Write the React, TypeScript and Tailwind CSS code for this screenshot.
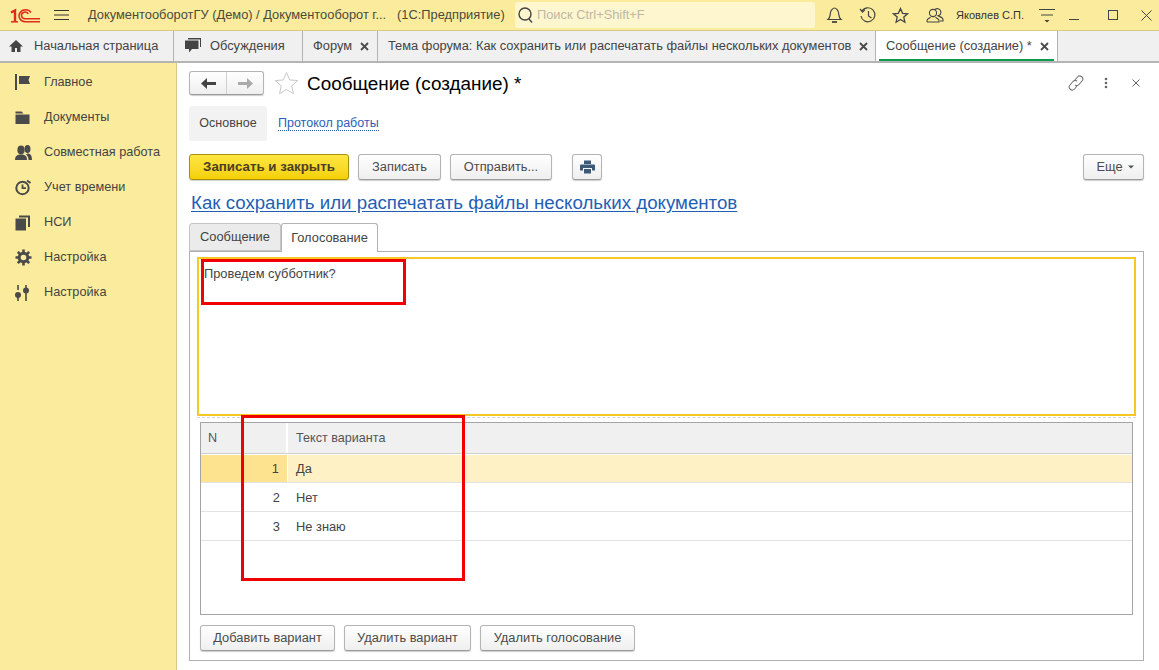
import { type ReactNode } from "react";

const RED_BOX = "absolute z-10 border-[3px] border-[#f00000]";

const BTN =
  "flex h-[26px] items-center justify-center rounded-[3px] border border-[#b4b4b4] border-b-[#9c9c9c] bg-gradient-to-b from-white to-[#efefef] text-[#4b4b4b] shadow-[0_1px_1px_rgba(0,0,0,0.2)]";

function Logo() {
  return (
    <svg width="30" height="15" viewBox="0 0 30 15" fill="none" stroke="#dd2b1c">
      <path d="M1 4.500 L5 2.500 V13.500" strokeWidth="2.400" />
      <path d="M1 13.800 H8" strokeWidth="1.500" />
      <path d="M21 4.500 A6.500 6 0 1 0 15 13.800 H30" strokeWidth="1.500" />
      <path d="M18.200 6 A3.500 3.300 0 1 0 15 10.700 H30" strokeWidth="1.500" />
    </svg>
  );
}

function NavIcon({ name }: { name: string }) {
  const c = "#4a4a4a";
  switch (name) {
    case "flag":
      return (
        <svg width="16" height="17" viewBox="0 0 16 17" fill={c}>
          <rect x="0" y="0" width="2" height="16" />
          <path d="M4 2h11l-1.500 4 1.500 4H4z" />
        </svg>
      );
    case "folder":
      return (
        <svg width="16" height="16" viewBox="0 0 16 16" fill={c}>
          <path d="M0.500 1.500h6l2 2H.5z" />
          <rect x="0.500" y="4.500" width="14" height="9.500" />
        </svg>
      );
    case "people":
      return (
        <svg width="17" height="16" viewBox="0 0 17 16" fill={c}>
          <ellipse cx="6" cy="5" rx="3.600" ry="4.400" />
          <path d="M0 15c0-4 2-5.500 6-5.500s6 1.500 6 5.500z" />
          <ellipse cx="12.500" cy="4" rx="3" ry="4" />
          <path d="M12.500 8.500c3 0 4.500 2 4.500 6.500h-3.500c0-2.500-1-4.500-2.500-5.500z" />
        </svg>
      );
    case "timer":
      return (
        <svg width="17" height="17" viewBox="0 0 17 17" fill="none" stroke={c} strokeWidth="2">
          <circle cx="7.500" cy="9" r="6.200" />
          <path d="M7.500 5.500v3.700h3.500" strokeWidth="1.800" />
          <path d="M12 1.500l3.500 2.500" />
        </svg>
      );
    case "pages":
      return (
        <svg width="16" height="16" viewBox="0 0 16 16" fill={c}>
          <rect x="0.500" y="3.500" width="10.500" height="12" />
          <path d="M4 0.500h11v11.500h-2V2.500H4z" />
        </svg>
      );
    case "gear":
      return (
        <svg width="17" height="17" viewBox="0 0 17 17" fill="none" stroke={c}>
          <circle cx="8.500" cy="8.500" r="4.300" strokeWidth="3" />
          <path
            d="M8.500 0.500v3M8.500 13.500v3M0.500 8.500h3M13.500 8.500h3M2.800 2.800l2.200 2.200M12 12l2.200 2.200M14.200 2.800L12 5M5 12l-2.200 2.200"
            strokeWidth="2.600"
          />
        </svg>
      );
    default:
      return (
        <svg width="16" height="16" viewBox="0 0 16 16" fill={c}>
          <rect x="2.200" y="0" width="1.600" height="5" />
          <circle cx="3" cy="10" r="3" />
          <rect x="2.200" y="12" width="1.600" height="4" />
          <rect x="10.200" y="0" width="1.600" height="3" />
          <circle cx="11" cy="5.500" r="3" />
          <rect x="10.200" y="8" width="1.600" height="8" />
        </svg>
      );
  }
}

function Close() {
  return (
    <svg width="9" height="9" viewBox="0 0 9 9" stroke="#4a4a4a" strokeWidth="1.800">
      <path d="M1 1l7 7M8 1L1 8" />
    </svg>
  );
}

function Tab({ children, className }: { children: ReactNode; className: string }) {
  return (
    <div className={`flex h-full shrink-0 items-center border-r border-[#b4b4b4] ${className}`}>
      {children}
    </div>
  );
}

const NAV = [
  ["flag", "Главное"],
  ["folder", "Документы"],
  ["people", "Совместная работа"],
  ["timer", "Учет времени"],
  ["pages", "НСИ"],
  ["gear", "Настройка"],
  ["sliders", "Настройка"],
];

const ROWS = [
  ["1", "Да"],
  ["2", "Нет"],
  ["3", "Не знаю"],
];

export default function App() {
  return (
    <div className="relative flex h-[670px] w-[1159px] flex-col overflow-hidden bg-white font-['Liberation_Sans',Arial,sans-serif] text-[12.85px] text-[#444]">
      {/* title bar */}
      <header className="flex h-[31px] shrink-0 items-center border-b border-[#d9c987] bg-[#fbec9d]">
        <div className="ml-[10px] flex w-[31px]">
          <Logo />
        </div>
        <svg className="ml-[13px]" width="15" height="12" viewBox="0 0 15 12" stroke="#333" strokeWidth="1">
          <path d="M0 1.500h15M0 6h15M0 10.500h15" />
        </svg>
        <span className="ml-[19px] w-[300px] whitespace-nowrap text-[#4a4a3a]">
          ДокументооборотГУ (Демо) / Документооборот г...
        </span>
        <span className="ml-[9px] w-[106px] whitespace-nowrap text-[#4a4a3a]">(1С:Предприятие)</span>
        <div className="ml-[12px] flex h-[26px] w-[300px] items-center rounded-[3px] bg-[#fdf6cf] pl-[2px] text-[#bdb9a2]">
          <svg width="17" height="18" viewBox="0 0 17 18" fill="none" stroke="#444" strokeWidth="1.400">
            <circle cx="8" cy="8" r="6" />
            <path d="M12 13l3 3.500" />
          </svg>
          <span className="ml-[3px]">Поиск Ctrl+Shift+F</span>
        </div>
        <svg className="ml-[11px]" width="17" height="18" viewBox="0 0 17 18" fill="none" stroke="#444" strokeWidth="1.200">
          <path d="M2 13.500c2.500-2 2-4.500 2.500-7S7 2 8.500 2s3.500 2 4 4.500 0 5 2.500 7z" />
          <path d="M6 16h5" strokeWidth="1.800" />
        </svg>
        <svg className="ml-[16px]" width="18" height="18" viewBox="0 0 18 18" fill="none" stroke="#444" strokeWidth="1.200">
          <path d="M3 5a7 7 0 1 1-1 5" />
          <path d="M1 3l2.500 3L6 3.500M9.500 5v5l3 2" />
        </svg>
        <svg className="ml-[15px]" width="17" height="17" viewBox="0 0 17 17" fill="none" stroke="#444" strokeWidth="1.300">
          <path d="M8.500 1.500l2.100 4.800 5 .5-3.800 3.300 1.100 5.100-4.400-2.700-4.400 2.700 1.100-5.100L1.400 6.800l5-.5z" />
        </svg>
        <svg className="ml-[17px]" width="18" height="17" viewBox="0 0 18 17" fill="none" stroke="#444" strokeWidth="1.100">
          <circle cx="7" cy="6" r="3.600" />
          <path d="M1 15v-1.500c0-1.500 2-2 3.500-3.200M9.500 10.300c1.500 1.200 3.500 1.700 3.500 3.200V15H1" />
          <path d="M9 2.500a3.600 3.600 0 1 1 3 6.300c1.500.8 5 1.500 5 3.700V14h-3" />
        </svg>
        <span className="ml-[12px] text-[11px] whitespace-nowrap text-[#333]">Яковлев С.П.</span>
        <svg className="ml-[15px]" width="16" height="15" viewBox="0 0 16 15" fill="#444" stroke="#444">
          <path d="M0 1.500h16M2 7h12" fill="none" />
          <path d="M5.500 12h5L8 14.500z" stroke="none" />
        </svg>
        <svg className="ml-[14px]" width="10" height="12" viewBox="0 0 10 12" stroke="#444">
          <path d="M0 10.500h10" />
        </svg>
        <svg className="ml-[29px]" width="10" height="10" viewBox="0 0 10 10" fill="none" stroke="#444">
          <rect x="0.500" y="0.500" width="9" height="9" />
        </svg>
        <svg className="ml-[23px]" width="11" height="11" viewBox="0 0 11 11" stroke="#444">
          <path d="M0.500 0.500l10 10M10.500 0.500l-10 10" />
        </svg>
      </header>

      {/* open windows */}
      <nav className="flex h-[32px] shrink-0 border-b-2 border-[#b4b4b4] bg-[#f0f0f0] text-[#444]">
        <Tab className="w-[174px] pl-[8px]">
          <svg width="16" height="14" viewBox="0 0 16 14" fill="#444">
            <path d="M8 1L1 7.500h2.500V13H7V9h2v4h3.500V7.500H15z" />
          </svg>
          <span className="ml-[10px] whitespace-nowrap">Начальная страница</span>
        </Tab>
        <Tab className="w-[129px] pl-[10px]">
          <svg width="17" height="16" viewBox="0 0 17 16" fill="#444">
            <path d="M4 0h13v9h-1V1.500H4z" />
            <path d="M1 2.500h13.500V11H8l-3 3.500V11H1z" />
          </svg>
          <span className="ml-[9px]">Обсуждения</span>
        </Tab>
        <Tab className="w-[75px] pl-[10px]">
          <span>Форум</span>
          <span className="ml-[8px] flex">
            <Close />
          </span>
        </Tab>
        <Tab className="w-[498px] pl-[10px]">
          <span className="whitespace-nowrap">Тема форума: Как сохранить или распечатать файлы нескольких документов</span>
          <span className="ml-[8px] flex">
            <Close />
          </span>
        </Tab>
        <Tab className="relative w-[182px] bg-white pl-[10px]">
          <span className="whitespace-nowrap">Сообщение (создание) *</span>
          <span className="ml-[8px] flex">
            <Close />
          </span>
          <div className="absolute right-[3px] bottom-0 left-[3px] h-[2px] bg-[#0a9b50]" />
        </Tab>
      </nav>

      <div className="flex min-h-0 flex-1">
        {/* sections */}
        <aside className="w-[177px] shrink-0 border-r border-[#d9c987] bg-[#fbec9d] pt-[2px] text-[12.7px] text-[#444]">
          {NAV.map(([icon, label], i) => (
            <div key={i} className="flex h-[35px] items-center pl-[15px]">
              <span className="flex w-[29px]">
                <NavIcon name={icon} />
              </span>
              <span className="whitespace-nowrap">{label}</span>
            </div>
          ))}
        </aside>

        {/* form */}
        <main className="min-w-0 flex-1 pl-[12px]">
          <div className="mt-[8px] flex h-[24px] items-center">
            <div className="flex h-[24px] w-[75px] rounded-[3px] border border-[#b4b4b4] border-b-[#9c9c9c] bg-gradient-to-b from-white to-[#efefef] shadow-[0_1px_1px_rgba(0,0,0,0.2)]">
              <div className="flex w-[37px] items-center justify-center border-r border-[#d0d0d0]">
                <svg width="15" height="11" viewBox="0 0 15 11" fill="#444">
                  <path d="M6 0v4h9v3H6v4L0 5.500z" />
                </svg>
              </div>
              <div className="flex flex-1 items-center justify-center">
                <svg width="15" height="11" viewBox="0 0 15 11" fill="#aaa">
                  <path d="M9 0v4H0v3h9v4l6-5.500z" />
                </svg>
              </div>
            </div>
            <svg className="ml-[10px]" width="25" height="24" viewBox="0 0 25 24" fill="none" stroke="#c8c8c8">
              <path d="M12.500 1.500l3.200 7.400 8 .7-6 5.300 1.800 7.800-7-4.200-7 4.200 1.800-7.800-6-5.300 8-.7z" />
            </svg>
            <h1 className="mt-[2px] ml-[8px] text-[18.9px] leading-none font-normal whitespace-nowrap text-black">
              Сообщение (создание) *
            </h1>
            <div className="ml-auto flex items-center pr-[19px]">
              <svg width="16" height="16" viewBox="0 0 16 16" fill="none" stroke="#777" strokeWidth="1.100">
                <path d="M7 5l2.500-3a3 3 0 0 1 4.500 4l-3 3.500a3 3 0 0 1-4 .5" />
                <path d="M9 11l-2.500 3a3 3 0 0 1-4.500-4l3-3.500a3 3 0 0 1 4-.5" />
              </svg>
              <svg className="ml-[20px]" width="4" height="12" viewBox="0 0 4 12" fill="#666">
                <circle cx="2" cy="2" r="1.300" />
                <circle cx="2" cy="6" r="1.300" />
                <circle cx="2" cy="10" r="1.300" />
              </svg>
              <svg className="ml-[24px]" width="8" height="8" viewBox="0 0 8 8" stroke="#666">
                <path d="M0.500 0.500l7 7M7.500 0.500l-7 7" />
              </svg>
            </div>
          </div>

          <div className="mt-[11px] flex h-[35px] items-center">
            <div className="flex h-full w-[78px] items-center justify-center rounded-[3px] bg-[#f2f2f2] text-[12.5px]">
              Основное
            </div>
            <span className="ml-[11px] border-b border-dotted border-[#2a5fb5] text-[12.5px] leading-[14px] text-[#2a5fb5]">
              Протокол работы
            </span>
          </div>

          <div className="mt-[13px] flex h-[27px] items-start">
            <div className="flex h-[26px] w-[160px] items-center justify-center rounded-[3px] border border-[#a8900c] bg-gradient-to-b from-[#ffe640] to-[#f4d000] text-[13.3px] font-bold text-[#4a4020] shadow-[0_1px_1px_rgba(0,0,0,0.2)]">
              Записать и закрыть
            </div>
            <div className={`${BTN} ml-[9px] w-[83px]`}>Записать</div>
            <div className={`${BTN} ml-[9px] w-[102px]`}>Отправить...</div>
            <div className={`${BTN} ml-[20px] w-[30px]`}>
              <svg width="15" height="14" viewBox="0 0 15 14" fill="#3c5a78">
                <path d="M4 0.500h7v3.500H4z" />
                <path d="M1 4.500h13a1 1 0 0 1 1 1V10.500h-3V8H3v2.500H0V5.500a1 1 0 0 1 1-1z" />
                <path d="M4 9h7v4.500H4z" />
              </svg>
            </div>
            <div className={`${BTN} mr-[15px] ml-auto w-[61px] gap-[5px] pl-[3px]`}>
              Еще
              <svg width="6" height="4" viewBox="0 0 6 4" fill="#555">
                <path d="M0 0.500h6L3 3.500z" />
              </svg>
            </div>
          </div>

          <a className="mt-[10px] ml-[2px] block h-[24px] text-[18.7px] leading-[24px] whitespace-nowrap text-[#1f5fb5] underline underline-offset-2">
            Как сохранить или распечатать файлы нескольких документов
          </a>

          <div className="mt-[8px] flex h-[29px]">
            <div className="flex h-[28px] w-[92px] items-center justify-center rounded-t-[3px] border border-[#c4c4c4] bg-[#ebebeb]">
              Сообщение
            </div>
            <div className="relative z-[1] flex h-[29px] w-[97px] items-center justify-center rounded-t-[3px] border border-b-0 border-[#b4b4b4] bg-white">
              Голосование
            </div>
          </div>

          {/* voting panel */}
          <section className="relative mt-[-1px] mr-[15px] h-[410px] border border-[#b0b0b0] px-[7px] pt-[5px]">
            <div className="h-[159px] border-2 border-[#f5c823] pt-[5px] pl-[5px] text-[#444]">
              Проведем субботник?
            </div>
            <div className="mt-[1px] mb-[4px] border-t border-dashed border-[#d4d4d4]" />

            <div className="mx-[3px] h-[193px] border border-[#a4a4a4]">
              <div className="flex h-[31px] border-b border-[#cfcfcf] bg-[#f0f0f0] text-[12.6px] text-[#555]">
                <div className="w-[87px] border-r-2 border-white pt-[6px] pl-[7px]">N</div>
                <div className="flex-1 pt-[6px] pl-[8px]">Текст варианта</div>
              </div>
              <div className="pt-[1px]">
                {ROWS.map(([n, text], i) => (
                  <div
                    key={n}
                    className={`flex border-b border-[#e2e2e2] ${
                      i === 0 ? "h-[28px] bg-[#fdf1c5]" : "h-[29px] pt-[2px]"
                    }`}
                  >
                    <div
                      className={`flex w-[87px] items-center justify-end pr-[8px] ${
                        i === 0 ? "border-r border-white bg-[#fde38f]" : ""
                      }`}
                    >
                      {n}
                    </div>
                    <div className="flex flex-1 items-center pl-[8px]">{text}</div>
                  </div>
                ))}
              </div>
            </div>

            <div className="mt-[10px] ml-[3px] flex gap-[9px]">
              <div className={`${BTN} w-[135px]`}>Добавить вариант</div>
              <div className={`${BTN} w-[127px]`}>Удалить вариант</div>
              <div className={`${BTN} w-[155px]`}>Удалить голосование</div>
            </div>
          </section>
        </main>
      </div>

      {/* annotations drawn on top of the screenshot */}
      <div className={`${RED_BOX} top-[259px] left-[201px] h-[46px] w-[205px]`} />
      <div className={`${RED_BOX} top-[415px] left-[241px] h-[166px] w-[224px]`} />
    </div>
  );
}
